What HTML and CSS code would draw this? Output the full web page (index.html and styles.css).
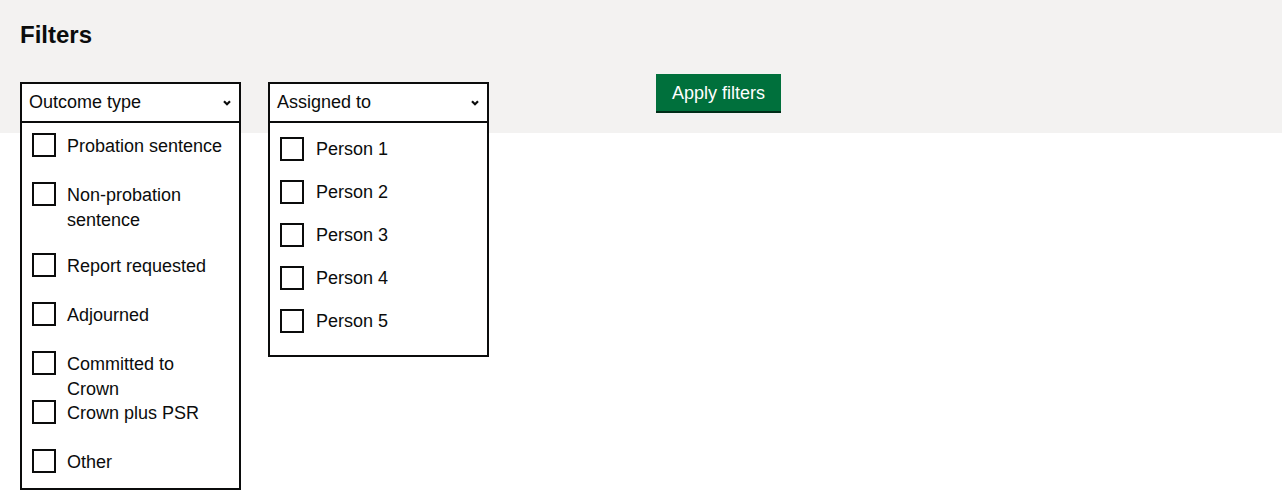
FILE: index.html
```html
<!DOCTYPE html>
<html lang="en">
<head>
<meta charset="utf-8">
<title>Filters</title>
<link rel="stylesheet" href="styles.css">
</head>
<body>
<section class="filters">
  <h2 class="filters__title">Filters</h2>
  <div class="filters__row">
    <div class="dropdown">
      <div class="dropdown__header">
        <span class="dropdown__label">Outcome type</span>
        <svg class="dropdown__chevron" width="8" height="6" viewBox="0 0 8 6" aria-hidden="true"><polyline points="1,1.2 4,4.2 7,1.2" fill="none" stroke="#0b0c0c" stroke-width="2.2"/></svg>
      </div>
      <ul class="dropdown__options dropdown__options--outcome">
        <li class="option"><span class="option__box"></span><span class="option__label">Probation sentence</span></li>
        <li class="option option--tall"><span class="option__box"></span><span class="option__label">Non-probation sentence</span></li>
        <li class="option"><span class="option__box"></span><span class="option__label">Report requested</span></li>
        <li class="option"><span class="option__box"></span><span class="option__label">Adjourned</span></li>
        <li class="option"><span class="option__box"></span><span class="option__label">Committed to Crown</span></li>
        <li class="option"><span class="option__box"></span><span class="option__label">Crown plus PSR</span></li>
        <li class="option"><span class="option__box"></span><span class="option__label">Other</span></li>
      </ul>
    </div>
    <div class="dropdown">
      <div class="dropdown__header">
        <span class="dropdown__label">Assigned to</span>
        <svg class="dropdown__chevron" width="8" height="6" viewBox="0 0 8 6" aria-hidden="true"><polyline points="1,1.2 4,4.2 7,1.2" fill="none" stroke="#0b0c0c" stroke-width="2.2"/></svg>
      </div>
      <ul class="dropdown__options dropdown__options--people">
        <li class="option"><span class="option__box"></span><span class="option__label">Person 1</span></li>
        <li class="option"><span class="option__box"></span><span class="option__label">Person 2</span></li>
        <li class="option"><span class="option__box"></span><span class="option__label">Person 3</span></li>
        <li class="option"><span class="option__box"></span><span class="option__label">Person 4</span></li>
        <li class="option"><span class="option__box"></span><span class="option__label">Person 5</span></li>
      </ul>
    </div>
    <button class="button" type="button">Apply filters</button>
  </div>
</section>
</body>
</html>
```
FILE: styles.css
```css
html, body {
  margin: 0;
  padding: 0;
  background: #ffffff;
}

body {
  font-family: "Liberation Sans", Arial, sans-serif;
  color: #0b0c0c;
  font-size: 18px;
  line-height: 25px;
}

.filters {
  padding: 20px 20px 0;
  background: linear-gradient(to bottom, #f3f2f1 0, #f3f2f1 133px, #ffffff 133px);
}

.filters__title {
  margin: 0;
  font-size: 24px;
  line-height: 30px;
  font-weight: 700;
}

.filters__row {
  display: flex;
  align-items: flex-start;
  margin-top: 24px;
}

.dropdown {
  box-sizing: border-box;
  width: 221px;
  margin-top: 8px;
  margin-right: 27px;
  border: 2px solid #0b0c0c;
  background: #ffffff;
}

.dropdown__header {
  display: flex;
  align-items: center;
  justify-content: space-between;
  padding: 6px 8px 6px 7px;
  border-bottom: 2px solid #0b0c0c;
}

.dropdown__chevron {
  display: block;
  flex: none;
  margin-top: 1px;
}

.dropdown__options {
  list-style: none;
  margin: 0;
  padding: 10px 10px 14px;
}

.option {
  display: flex;
  align-items: flex-start;
  gap: 11px;
  height: 25px;
  margin-bottom: 24px;
}

.option:last-child {
  margin-bottom: 0;
}

.option--tall {
  height: 47px;
}

.option__box {
  box-sizing: border-box;
  flex: none;
  width: 24px;
  height: 24px;
  border: 2px solid #0b0c0c;
  background: #ffffff;
}

.option__label {
  padding-top: 1px;
}

.dropdown__options--people {
  padding: 14px 10px 21px;
}

.dropdown__options--people .option {
  gap: 12px;
  margin-bottom: 18px;
}

.dropdown__options--people .option:last-child {
  margin-bottom: 0;
}

.dropdown__options--people .option__label {
  padding-top: 0;
}

.button {
  box-sizing: border-box;
  margin: 0 0 0 140px;
  padding: 8px 14px 7px;
  border: 2px solid transparent;
  border-radius: 0;
  background: #00703c;
  box-shadow: 0 2px 0 #002d18;
  color: #ffffff;
  font-family: "Liberation Sans", Arial, sans-serif;
  font-size: 18px;
  line-height: 18px;
  cursor: pointer;
}
```
